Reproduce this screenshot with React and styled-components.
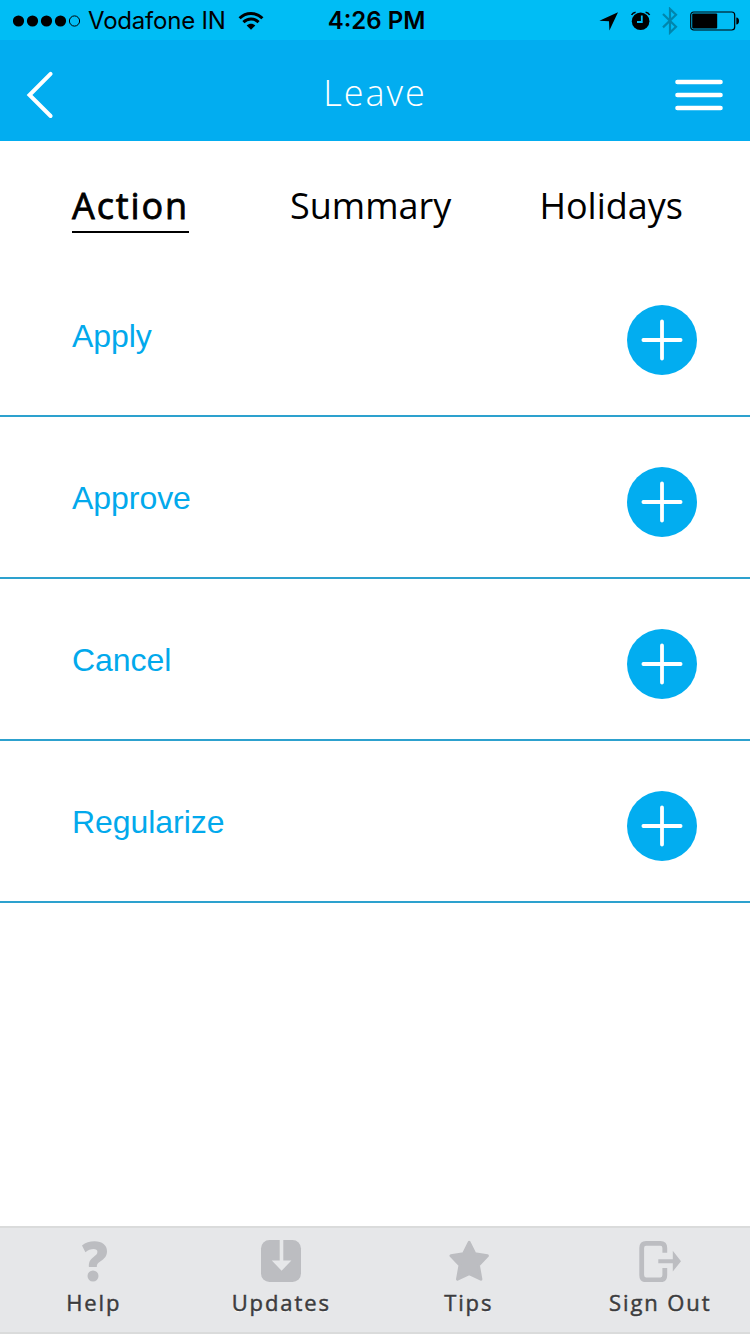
import { useState } from "react";
import styled, { createGlobalStyle } from "styled-components";

const tabs = ["Action", "Summary", "Holidays"];
const actions = ["Apply", "Approve", "Cancel", "Regularize"];

function StatusBar() {
  return (
    <StatusWrapper>
      <div className="status-left">
        <svg width="68" height="12" viewBox="0 0 68 12">
          <circle cx="5.5" cy="6" r="5.6" />
          <circle cx="19.5" cy="6" r="5.6" />
          <circle cx="33.5" cy="6" r="5.6" />
          <circle cx="47.5" cy="6" r="5.6" />
          <circle cx="61.5" cy="6" r="5.1" fill="none" stroke="#000" strokeWidth="1" />
        </svg>
        <Carrier>Vodafone IN</Carrier>
        <svg className="wifi" width="26" height="20" viewBox="0 0 26 20">
          <g fill="none" stroke="#000" strokeWidth="3">
            <path d="M1.6 7.2C8 .8 18 .8 24.4 7.2" />
            <path d="M5.4 11.1C9.8 6.9 16.2 6.9 20.6 11.1" />
          </g>
          <path d="M8.7 14.4C11.2 12.1 14.8 12.1 17.3 14.4L13 18.7Z" />
        </svg>
      </div>
      <Clock>4:26 PM</Clock>
      <div className="status-right">
        <svg width="20" height="20" viewBox="0 0 20 20">
          <path d="M19 1.2L.4 9.8L10 10.2L10.4 19.4Z" />
        </svg>
        <svg className="alarm" width="20" height="20" viewBox="0 0 20 20">
          <circle cx="9.6" cy="10.2" r="8.8" />
          <path d="M.6 4Q1.8 1.7 4.6 1.3M18.6 4Q17.4 1.7 14.6 1.3" fill="none" stroke="#000" strokeWidth="1.6" />
          <path d="M10.8 4.6V11H6" fill="none" stroke="#00bdf5" strokeWidth="1.8" />
        </svg>
        <svg className="bluetooth" width="16" height="28" viewBox="0 0 16 28">
          <path d="M1 7L14 19.8L8 25.6V2L14 7.8L1 20.4" fill="none" stroke="#0086ad" strokeWidth="2.2" />
        </svg>
        <svg className="battery" width="50" height="20" viewBox="0 0 50 20">
          <rect x=".7" y="1" width="44" height="18" rx="3" fill="none" stroke="#000" strokeWidth="1.2" />
          <rect x="2.2" y="2.6" width="25" height="14.8" rx="1" />
          <path d="M46.3 6.4Q49 6.6 49 10Q49 13.4 46.3 13.6Z" />
        </svg>
      </div>
    </StatusWrapper>
  );
}

function Header() {
  return (
    <HeaderWrapper>
      <IconButton aria-label="Back">
        <svg width="28" height="50" viewBox="0 0 28 50">
          <path d="M24.6 3.8L3.5 25L24.6 46" fill="none" stroke="#fff" strokeWidth="4" strokeLinecap="round" />
        </svg>
      </IconButton>
      <Title>Leave</Title>
      <IconButton aria-label="Menu">
        <svg width="48" height="34" viewBox="0 0 48 34">
          <path d="M2.4 4H45.6M2.4 17H45.6M2.4 30H45.6" stroke="#fff" strokeWidth="4.4" strokeLinecap="round" />
        </svg>
      </IconButton>
    </HeaderWrapper>
  );
}

function HelpIcon() {
  return (
    <svg width="42" height="44" viewBox="0 0 42 44">
      <path d="M9 7.4C12.6 4.8 16.6 3.3 21.6 3.3C29.2 3.3 34 7.2 34 13.2C34 18.3 31.4 20.6 27.2 23.4C24.4 25.3 23.8 26.3 23.8 29H15.9C15.6 23.8 17.2 21.4 20.6 18.9C23.2 16.9 24.4 15.9 24.4 13.7C24.4 11.9 22.9 11.1 20.6 11.1C17.8 11.1 15.2 12.2 12.4 14.2Z" />
      <circle cx="20" cy="38" r="5.5" />
    </svg>
  );
}

function UpdatesIcon() {
  return (
    <svg width="42" height="44" viewBox="0 0 42 44">
      <rect x="1" y="2" width="40" height="42" rx="8.5" />
      <path d="M19.7 2H23.3V22.5H31.4L21.6 32.7L11.8 22.5H19.7Z" fill="#e6e7e9" />
    </svg>
  );
}

function TipsIcon() {
  return (
    <svg width="42" height="44" viewBox="0 0 42 44">
      <path
        d="M21.2 4.4L26.8 15.7L39.4 17.8L30.4 27.2L32.9 41.2L21.2 35.6L9.5 41.2L12 27.2L3 17.8L15.6 15.7Z"
        stroke="#bcbdc1"
        strokeWidth="3"
        strokeLinejoin="round"
      />
    </svg>
  );
}

function SignOutIcon() {
  return (
    <svg width="42" height="44" viewBox="0 0 42 44">
      <path
        d="M25.8 14.8V10Q25.8 5.3 21.5 5.3H7Q2.7 5.3 2.7 10V37Q2.7 41.8 7 41.8H21.5Q25.8 41.8 25.8 37V30"
        fill="none"
        stroke="#bcbdc1"
        strokeWidth="4.8"
      />
      <path d="M19.3 21.2H33.8V12.8L42 23.2L33.8 33.5V25.2H19.3Z" />
    </svg>
  );
}

const footerItems = [
  { label: "Help", icon: <HelpIcon /> },
  { label: "Updates", icon: <UpdatesIcon /> },
  { label: "Tips", icon: <TipsIcon /> },
  { label: "Sign Out", icon: <SignOutIcon />, indent: "8px" },
];

function App() {
  const [active, setActive] = useState("Action");

  return (
    <>
      <GlobalStyle />
      <Page>
        <StatusBar />
        <Header />
        <TabBar>
          {tabs.map((tab) => (
            <Tab key={tab} $active={tab === active} onClick={() => setActive(tab)}>
              {tab}
            </Tab>
          ))}
        </TabBar>
        <List>
          {actions.map((action) => (
            <Row key={action}>
              <RowLabel>{action}</RowLabel>
              <AddButton aria-label={action}>
                <svg width="42" height="42" viewBox="0 0 42 42">
                  <path d="M2.4 21H39.6M21 2.4V39.6" stroke="#fff" strokeWidth="3.8" strokeLinecap="round" />
                </svg>
              </AddButton>
            </Row>
          ))}
        </List>
        <Footer>
          {footerItems.map(({ label, icon, indent }) => (
            <FooterItem key={label} $indent={indent}>
              {icon}
              <span>{label}</span>
            </FooterItem>
          ))}
        </Footer>
      </Page>
    </>
  );
}

const GlobalStyle = createGlobalStyle`
  * {
    box-sizing: border-box;
    margin: 0;
    padding: 0;
  }

  body {
    background: #fff;
  }

  button {
    border: none;
    background: none;
    cursor: pointer;
  }

  svg {
    display: block;
    flex-shrink: 0;
  }
`;

const Page = styled.div`
  display: flex;
  flex-direction: column;
  width: 750px;
  height: 1334px;
  background: #fff;
  overflow: hidden;
`;

const StatusWrapper = styled.div`
  display: grid;
  grid-template-columns: 1fr auto 1fr;
  align-items: center;
  height: 40px;
  padding: 1px 10px 0 13px;
  background: #00bdf5;
  font-family: Inter, sans-serif;
  color: #000;

  .status-left,
  .status-right {
    display: flex;
    align-items: center;
  }

  .status-right {
    justify-content: flex-end;
  }

  .wifi {
    margin-left: 12px;
  }

  .alarm {
    margin-left: 12px;
  }

  .bluetooth {
    margin-left: 11px;
  }

  .battery {
    margin-left: 12px;
  }
`;

const Carrier = styled.span`
  margin-left: 7px;
  font-size: 24px;
  letter-spacing: -0.2px;
  line-height: 39px;
  white-space: nowrap;
`;

const Clock = styled.span`
  font-size: 24px;
  font-weight: 600;
  line-height: 39px;
  white-space: nowrap;
`;

const HeaderWrapper = styled.header`
  display: grid;
  grid-template-columns: 1fr auto 1fr;
  align-items: center;
  height: 101px;
  padding: 8px 27px 0 26px;
  background: #02adf0;

  button:last-child {
    justify-self: end;
  }
`;

const IconButton = styled.button`
  justify-self: start;
`;

const Title = styled.h1`
  margin-top: -3px;
  padding-left: 1px;
  font-family: "Open Sans", sans-serif;
  font-size: 36px;
  font-weight: 300;
  letter-spacing: 2px;
  line-height: 48px;
  color: #fff;
`;

const TabBar = styled.nav`
  display: flex;
  align-items: flex-start;
  height: 114px;
  padding: 42px 67px 0 72px;
`;

const Tab = styled.button`
  height: 50px;
  padding-bottom: 2px;
  border-bottom: 2px solid ${({ $active }) => ($active ? "#000" : "transparent")};
  font-family: "Open Sans", sans-serif;
  font-size: 36px;
  font-weight: 400;
  letter-spacing: ${({ $active }) => ($active ? "1.9px" : "0")};
  line-height: 46px;
  color: #000;
  -webkit-text-stroke: ${({ $active }) => ($active ? "0.8px #000" : "0")};

  &:first-child {
    width: 117px;
    white-space: nowrap;
  }

  &:nth-child(2) {
    margin-left: 101px;
  }

  &:last-child {
    margin-left: auto;
  }
`;

const List = styled.main`
  flex: 1;
`;

const Row = styled.div`
  display: flex;
  justify-content: space-between;
  align-items: flex-start;
  height: 162px;
  padding: 50px 53px 0 72px;
  border-bottom: 2px solid #2da1ce;
`;

const RowLabel = styled.span`
  margin-top: 12px;
  font-family: "Liberation Sans", sans-serif;
  font-size: 32px;
  letter-spacing: -0.05px;
  line-height: 38px;
  color: #02a9ec;
`;

const AddButton = styled.button`
  display: flex;
  justify-content: center;
  align-items: center;
  width: 70px;
  height: 70px;
  border-radius: 50%;
  background: #02adf0;
`;

const Footer = styled.footer`
  display: grid;
  grid-template-columns: repeat(4, 1fr);
  height: 108px;
  border-top: 2px solid #dadbdb;
  border-bottom: 2px solid #dadbdb;
  background: #e6e7e9;
`;

const FooterItem = styled.button`
  display: flex;
  flex-direction: column;
  align-items: center;
  padding-top: 10px;
  padding-left: ${({ $indent }) => $indent || "0"};
  font-family: "Open Sans", sans-serif;
  font-size: 22px;
  font-weight: 400;
  letter-spacing: 1.9px;
  line-height: 30px;
  color: #3c3c3e;
  text-shadow: 0 1px 1px #fff;
  -webkit-text-stroke: 0.5px #3c3c3e;

  svg {
    fill: #bcbdc1;
  }

  span {
    margin-top: 5px;
  }
`;

export default App;
